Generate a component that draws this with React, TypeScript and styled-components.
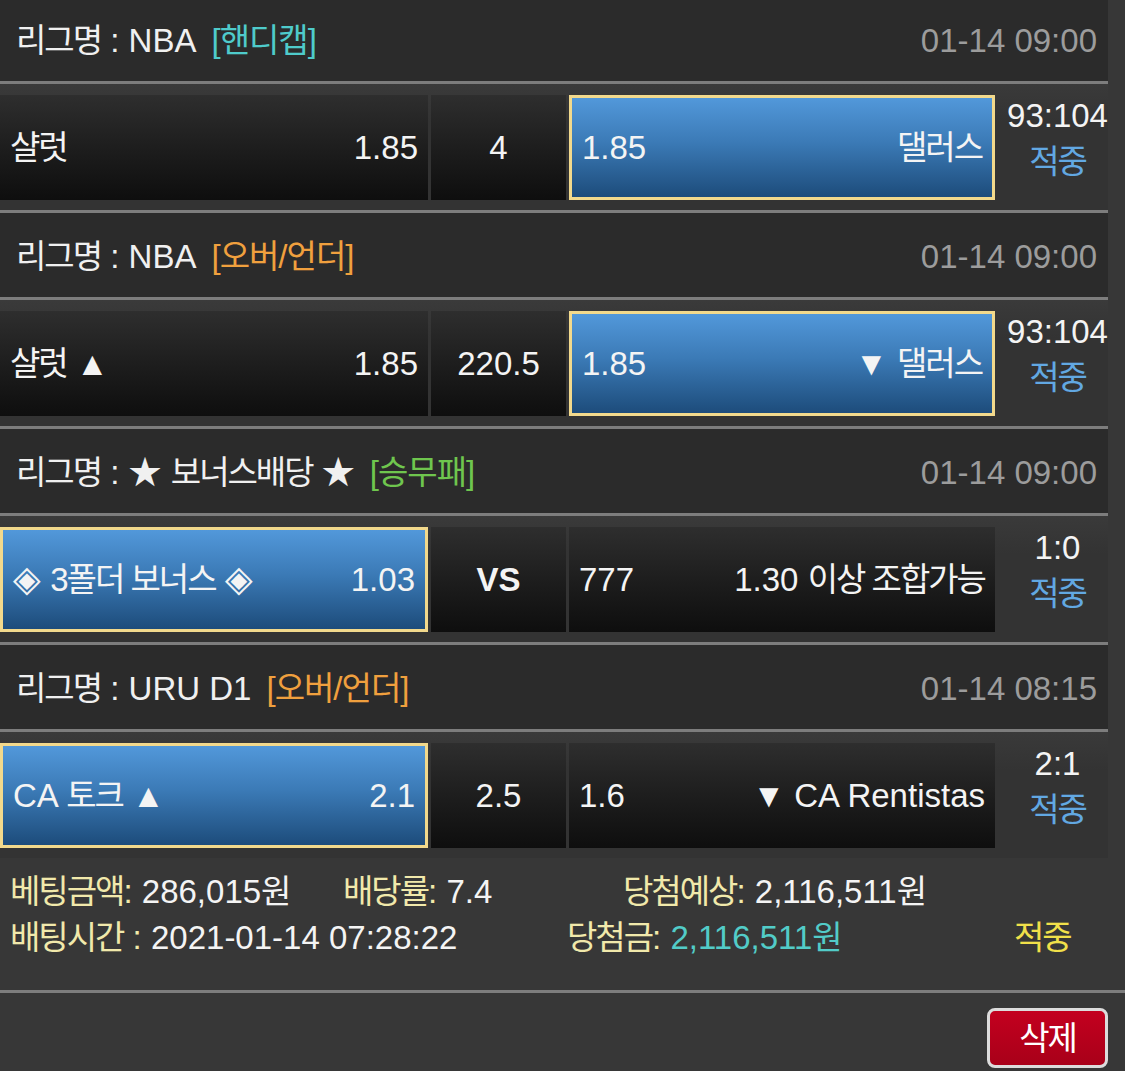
import React from 'react';
import styled, { createGlobalStyle, css } from 'styled-components';

const Global = createGlobalStyle`
  html, body { margin: 0; padding: 0; background: #373737; }
  body {
    font-family: "Liberation Sans", Arial, "Noto Sans CJK KR", sans-serif;
    color: #f2f2f2;
  }
`;

const Page = styled.div`
  width: 1125px;
  height: 1071px;
  overflow: hidden;
  background: #373737;
  font-size: 33px;
`;

const List = styled.div`
  width: 1108px;
  margin-top: -3px;
`;

/* Korean run: the reference's Hangul face is narrower than Noto CJK */
const Ko = styled.span`
  letter-spacing: -2px;
`;

const LeagueHeader = styled.div`
  box-sizing: border-box;
  height: 87px;
  padding: 4px 11px 0 16px;
  display: flex;
  align-items: center;
  justify-content: space-between;
  background: #2b2b2b;
  border-bottom: 3px solid #7d7d7d;
  line-height: 40px;
`;

const LeagueName = styled.div`
  display: flex;
  align-items: center;
  color: #f0f0f0;
  white-space: pre;
`;

const Tag = styled.span<{ $color: string }>`
  margin-left: 15px;
  letter-spacing: -1px;
  color: ${(p) => p.$color};
`;

const DateText = styled.span`
  color: #9c9c9c;
`;

const MatchRow = styled.div<{ $last?: boolean }>`
  display: flex;
  height: 105px;
  padding: 11px 0 10px;
  background: linear-gradient(#3a3a3a, #333333 30%, #333333);
  border-bottom: ${(p) => (p.$last ? 'none' : '3px solid #7d7d7d')};
`;

const Cell = styled.div<{ $w: number; $active?: boolean; $center?: boolean }>`
  box-sizing: border-box;
  width: ${(p) => p.$w}px;
  margin-right: 3px;
  display: flex;
  align-items: center;
  justify-content: ${(p) => (p.$center ? 'center' : 'space-between')};
  padding: 0 10px;
  line-height: 40px;
  white-space: pre;
  color: #f4f4f4;
  background: linear-gradient(#2e2e2e, #1c1c1c 55%, #0e0e0e);
  ${(p) =>
    p.$active &&
    css`
      background: linear-gradient(#5298da, #3b7ab6 45%, #1d4c7b);
      border: 3px solid #f2d98c;
    `}
`;

const Diamond = styled.span`
  font-size: 36px;
  line-height: 1;
`;

const Vs = styled.span`
  font-weight: bold;
`;

const ScoreCol = styled.div`
  width: 113px;
  box-sizing: border-box;
  margin-left: -3px;
  padding-left: 12px;
  margin-top: -2px;
  display: flex;
  flex-direction: column;
  align-items: center;
  line-height: 46px;
  color: #f4f4f4;
`;

const Hit = styled.span`
  color: #62a8e2;
  letter-spacing: -2px;
`;

const Summary = styled.div`
  padding: 11px 0 29px 10px;
  border-bottom: 3px solid #7d7d7d;
  line-height: 46px;
`;

const SummaryLine = styled.div`
  display: flex;
  white-space: pre;
`;

const Item = styled.div<{ $w?: number }>`
  width: ${(p) => (p.$w ? `${p.$w}px` : 'auto')};
  flex: none;
  color: #f4f4f4;
`;

const Label = styled.span`
  color: #f1e9ab;
`;

const Money = styled.span`
  color: #52ccc8;
`;

const Win = styled.span`
  color: #f1e04a;
  letter-spacing: -2px;
`;

const ButtonRow = styled.div`
  display: flex;
  justify-content: flex-end;
  padding: 15px 17px 0 0;
`;

const DeleteButton = styled.button`
  width: 121px;
  height: 60px;
  box-sizing: border-box;
  border: 3px solid #dcdcdc;
  border-radius: 8px;
  background: linear-gradient(#c3001f, #a80019);
  color: #fff;
  font-family: inherit;
  font-size: 33px;
  letter-spacing: -2px;
  line-height: 1;
  padding: 0;
  cursor: pointer;
`;

type Game = {
  league: React.ReactNode;
  tag: string;
  tagColor: string;
  date: string;
  home: React.ReactNode;
  homeOdd: string;
  mid: string;
  bold?: boolean;
  awayOdd: string;
  away: React.ReactNode;
  pick: 'home' | 'away';
  score: string;
};

const games: Game[] = [
  {
    league: 'NBA',
    tag: '[핸디캡]',
    tagColor: '#4fcbcb',
    date: '01-14 09:00',
    home: <Ko>샬럿</Ko>,
    homeOdd: '1.85',
    mid: '4',
    awayOdd: '1.85',
    away: <Ko>댈러스</Ko>,
    pick: 'away',
    score: '93:104',
  },
  {
    league: 'NBA',
    tag: '[오버/언더]',
    tagColor: '#f0a03e',
    date: '01-14 09:00',
    home: (
      <>
        <Ko>샬럿</Ko> ▲
      </>
    ),
    homeOdd: '1.85',
    mid: '220.5',
    awayOdd: '1.85',
    away: (
      <>
        ▼ <Ko>댈러스</Ko>
      </>
    ),
    pick: 'away',
    score: '93:104',
  },
  {
    league: (
      <>
        ★ <Ko>보너스배당</Ko> ★
      </>
    ),
    tag: '[승무패]',
    tagColor: '#6fc64e',
    date: '01-14 09:00',
    home: (
      <>
        <Diamond>◈</Diamond> <Ko>3폴더 보너스</Ko> <Diamond>◈</Diamond>
      </>
    ),
    homeOdd: '1.03',
    mid: 'VS',
    bold: true,
    awayOdd: '777',
    away: (
      <>
        1.30 <Ko>이상 조합가능</Ko>
      </>
    ),
    pick: 'home',
    score: '1:0',
  },
  {
    league: 'URU D1',
    tag: '[오버/언더]',
    tagColor: '#f0a03e',
    date: '01-14 08:15',
    home: (
      <>
        CA <Ko>토크</Ko> ▲
      </>
    ),
    homeOdd: '2.1',
    mid: '2.5',
    awayOdd: '1.6',
    away: '▼ CA Rentistas',
    pick: 'home',
    score: '2:1',
  },
];

export default function App() {
  return (
    <Page>
      <Global />
      <List>
        {games.map((g, i) => (
          <React.Fragment key={i}>
            <LeagueHeader>
              <LeagueName>
                <span>
                  <Ko>리그명</Ko> : {g.league}
                </span>
                <Tag $color={g.tagColor}>{g.tag}</Tag>
              </LeagueName>
              <DateText>{g.date}</DateText>
            </LeagueHeader>
            <MatchRow $last={i === games.length - 1}>
              <Cell $w={428} $active={g.pick === 'home'}>
                <span>{g.home}</span>
                <span>{g.homeOdd}</span>
              </Cell>
              <Cell $w={135} $center>
                {g.bold ? <Vs>{g.mid}</Vs> : <span>{g.mid}</span>}
              </Cell>
              <Cell $w={426} $active={g.pick === 'away'}>
                <span>{g.awayOdd}</span>
                <span>{g.away}</span>
              </Cell>
              <ScoreCol>
                <span>{g.score}</span>
                <Hit>적중</Hit>
              </ScoreCol>
            </MatchRow>
          </React.Fragment>
        ))}
      </List>
      <Summary>
        <SummaryLine>
          <Item $w={333}>
            <Label>
              <Ko>베팅금액</Ko>:
            </Label>{' '}
            286,015<Ko>원</Ko>
          </Item>
          <Item $w={280}>
            <Label>
              <Ko>배당률</Ko>:
            </Label>{' '}
            7.4
          </Item>
          <Item>
            <Label>
              <Ko>당첨예상</Ko>:
            </Label>{' '}
            2,116,511<Ko>원</Ko>
          </Item>
        </SummaryLine>
        <SummaryLine>
          <Item $w={557}>
            <Label>
              <Ko>배팅시간</Ko> :
            </Label>{' '}
            2021-01-14 07:28:22
          </Item>
          <Item $w={447}>
            <Label>
              <Ko>당첨금</Ko>:
            </Label>{' '}
            <Money>
              2,116,511<Ko>원</Ko>
            </Money>
          </Item>
          <Item>
            <Win>적중</Win>
          </Item>
        </SummaryLine>
      </Summary>
      <ButtonRow>
        <DeleteButton>삭제</DeleteButton>
      </ButtonRow>
    </Page>
  );
}
